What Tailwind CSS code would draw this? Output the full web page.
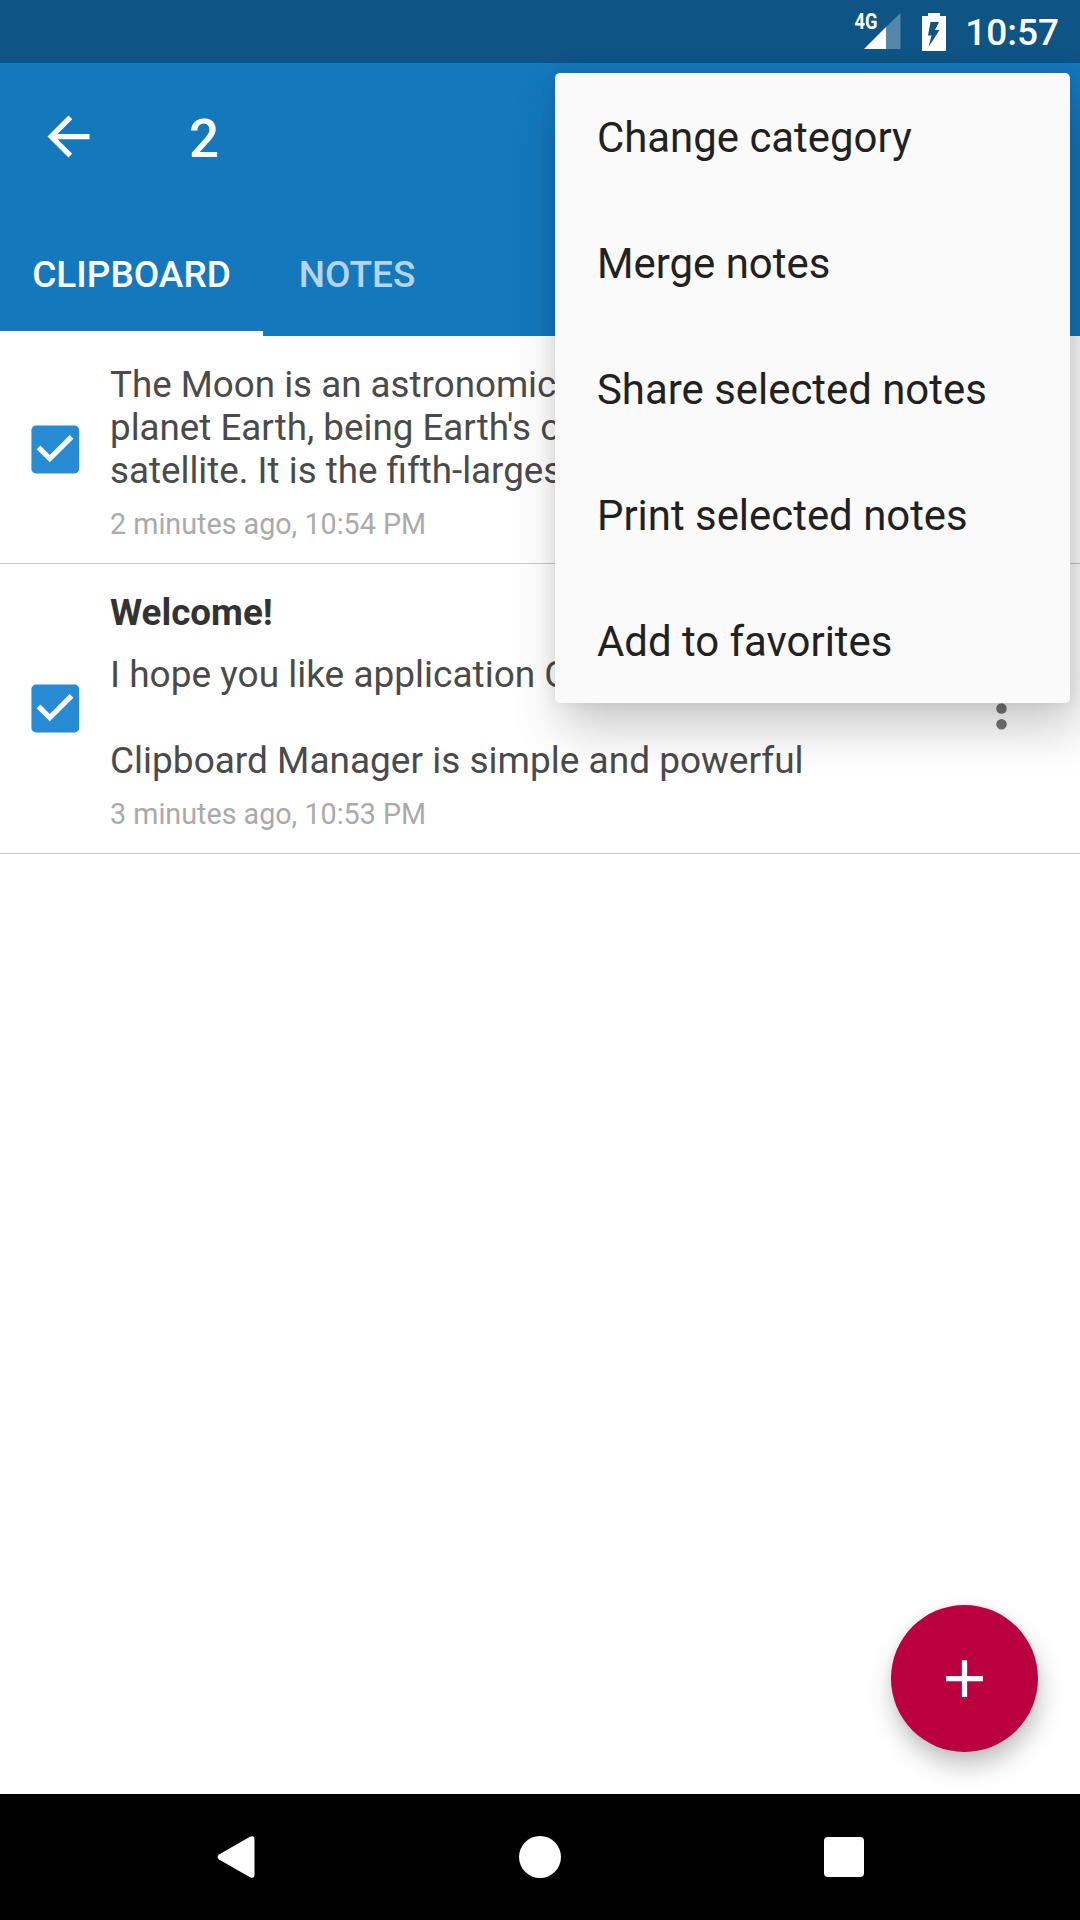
<html lang="en">
  <head>
    <meta charset="UTF-8" />
    <meta name="viewport" content="width=device-width, initial-scale=1.0" />
    <title>Clipboard Manager</title>
    <script src="https://cdn.jsdelivr.net/npm/@tailwindcss/browser@4"></script>
  </head>
  <body class="relative flex h-[1920px] w-[1080px] flex-col overflow-hidden bg-white font-[Roboto,sans-serif]">
    <!-- Status bar -->
    <div class="flex h-[63px] items-center justify-end bg-[#0e5484] pr-[21px] text-white">
      <svg class="h-[63px] w-[60px]" viewBox="850 0 60 63">
        <text x="854.5" y="29" font-size="22" font-weight="700" fill="#fff" textLength="23" lengthAdjust="spacingAndGlyphs">4G</text>
        <path d="M900.5 13V49H886V27z" fill="#fff" fill-opacity=".3" />
        <path d="M886 27V49H864z" fill="#fff" />
      </svg>
      <svg class="mr-[19px] ml-[12px] h-[38px] w-[24px]" viewBox="0 0 24 38">
        <path d="M6 0H18V3H24V38H0V3H6z" fill="#fff" />
        <path d="M8.500 9H17L13 17H17.500L6.500 34L9.500 22.500H6z" fill="#0e5484" />
      </svg>
      <span class="pt-[2px] text-[37px] leading-[43px] font-medium">10:57</span>
    </div>

    <!-- Toolbar -->
    <header class="bg-[#1478bd] text-white">
      <div class="flex h-[147px] items-center pl-[37px]">
        <svg class="h-[63px] w-[63px]" viewBox="0 0 24 24" fill="#fff">
          <path d="M20 11H7.83l5.59-5.59L12 4l-8 8 8 8 1.41-1.41L7.83 13H20v-2z" />
        </svg>
        <h1 class="ml-[89px] pt-[4px] text-[53px] leading-[62px] font-medium">2</h1>
      </div>
      <div class="flex h-[126px] text-[37px] leading-[43px] font-medium">
        <div class="flex w-[263px] items-center justify-center border-b-[5px] border-white pt-[7px]">CLIPBOARD</div>
        <div class="flex w-[188px] items-center justify-center pt-[2px] text-white/70">NOTES</div>
      </div>
    </header>

    <!-- Notes list -->
    <main class="flex-1">
      <div class="flex h-[228px] items-center border-b border-[#c8c8c8] pl-[23px]">
        <svg class="h-[63px] w-[63px] shrink-0" viewBox="0 0 24 24">
          <rect x="3.200" y="2.900" width="18.200" height="18.200" rx="1.700" fill="#268bd2" />
          <path d="M10.200 16.900l-5-5 1.410-1.410L10.200 14.070l7.590-7.590L19.200 7.900z" fill="#fff" />
        </svg>
        <div class="ml-[24px] h-[227px] flex-1 pt-[27px]">
          <p class="text-[36.750px] leading-[43px] whitespace-nowrap text-[#4a4a4a]">
            The Moon is an astronomical<br />
            planet Earth, being Earth's only<br />
            satellite. It is the fifth-largest
          </p>
          <p class="mt-[15px] text-[28.700px] leading-[34px] text-[#aaa]">2 minutes ago, 10:54 PM</p>
        </div>
      </div>
      <div class="flex h-[290px] items-center border-b border-[#c8c8c8] pr-[47px] pl-[23px]">
        <svg class="h-[63px] w-[63px] shrink-0" viewBox="0 0 24 24">
          <rect x="3.200" y="2.900" width="18.200" height="18.200" rx="1.700" fill="#268bd2" />
          <path d="M10.200 16.900l-5-5 1.410-1.410L10.200 14.070l7.590-7.590L19.200 7.900z" fill="#fff" />
        </svg>
        <div class="ml-[24px] h-[289px] flex-1 pt-[27px]">
          <h2 class="text-[36.750px] leading-[43px] font-bold text-[#333]">Welcome!</h2>
          <p class="mt-[19px] text-[37px] leading-[43px] whitespace-nowrap text-[#4a4a4a]">
            I hope you like application Clipboard<br />
            <br />
            Clipboard Manager is simple and powerful
          </p>
          <p class="mt-[15px] text-[28.700px] leading-[34px] text-[#aaa]">3 minutes ago, 10:53 PM</p>
        </div>
        <svg class="h-[63px] w-[63px] shrink-0" viewBox="0 0 24 24" fill="#757575">
          <circle cx="12" cy="6" r="2" />
          <circle cx="12" cy="12" r="2" />
          <circle cx="12" cy="18" r="2" />
        </svg>
      </div>
    </main>

    <!-- Navigation bar -->
    <nav class="flex h-[126px] items-center bg-black pl-[217px]">
      <svg class="h-[42px] w-[38px]" viewBox="0 0 38 42" fill="#fff">
        <path d="M33 .8Q37.5-1.200 37.500 3.500V38.500Q37.500 43.200 33 41.200L2 23.500Q-1 21 2 18.500z" />
      </svg>
      <div class="ml-[264px] h-[42px] w-[42px] rounded-full bg-white"></div>
      <div class="ml-[263px] h-[40px] w-[40px] rounded-[4px] bg-white"></div>
    </nav>

    <!-- Add note button -->
    <button class="absolute top-[1605px] left-[891px] flex h-[147px] w-[147px] items-center justify-center rounded-full bg-[#bb0040] shadow-[2px_14px_24px_rgba(0,0,0,0.24),0_0_10px_rgba(0,0,0,0.06)]">
      <svg class="h-[63px] w-[63px]" viewBox="0 0 24 24" fill="#fff">
        <path d="M19 13h-6v6h-2v-6H5v-2h6V5h2v6h6v2z" />
      </svg>
    </button>

    <!-- Overflow menu -->
    <ul class="absolute top-[73px] left-[555px] w-[515px] rounded-[5px] bg-[#fafafa] text-[41.900px] leading-[49px] text-[#212121] shadow-[8px_24px_50px_rgba(0,0,0,0.22),0_0_16px_rgba(0,0,0,0.08)]">
      <li class="flex h-[126px] items-center px-[42px] pt-[2px]">Change category</li>
      <li class="flex h-[126px] items-center px-[42px] pt-[2px]">Merge notes</li>
      <li class="flex h-[126px] items-center px-[42px] pt-[2px]">Share selected notes</li>
      <li class="flex h-[126px] items-center px-[42px] pt-[2px]">Print selected notes</li>
      <li class="flex h-[126px] items-center px-[42px] pt-[2px]">Add to favorites</li>
    </ul>
  </body>
</html>
